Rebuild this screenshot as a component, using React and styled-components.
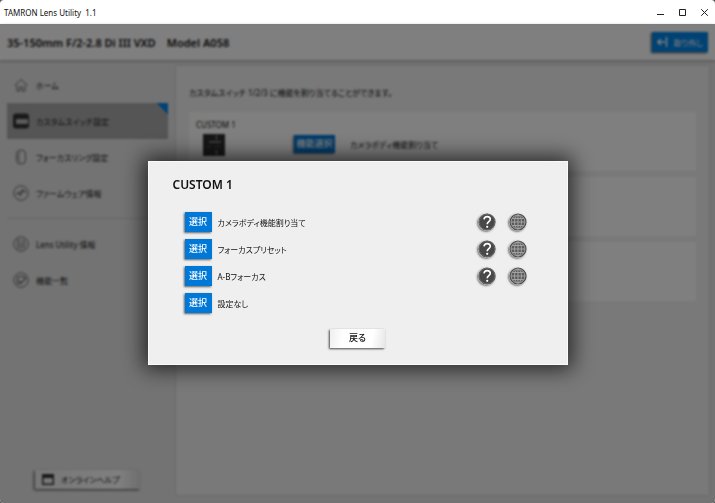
import styled, { createGlobalStyle } from "styled-components";

const navItems = [
    { label: "ホーム", icon: "home" },
    { label: "カスタムスイッチ設定", icon: "switch", active: true },
    { label: "フォーカスリング設定", icon: "ring" },
    { label: "ファームウェア情報", icon: "firmware" },
]

const infoItems = [
    { label: "Lens Utility 情報", icon: "info" },
    { label: "機能一覧", icon: "list" },
]

const functions = [
    { label: "カメラボディ機能割り当て", help: true },
    { label: "フォーカスプリセット", help: true },
    { label: "A-Bフォーカス", help: true },
    { label: "設定なし", help: false },
]

export default function App(){
    return (
        <Window>
            <TitleBar>
                <span>TAMRON Lens Utility&nbsp; 1.1</span>
                <div className="controls">
                    <button aria-label="最小化">
                        <svg width="9" height="9" viewBox="0 0 9 9"><path d="M1 6.500h7" /></svg>
                    </button>
                    <button aria-label="最大化">
                        <svg width="9" height="9" viewBox="0 0 9 9"><path d="M1.500 1.500h6v6h-6z" /></svg>
                    </button>
                    <button aria-label="閉じる">
                        <svg width="9" height="9" viewBox="0 0 9 9"><path d="M1.200 1.200l6.600 6.600M7.800 1.200l-6.600 6.600" /></svg>
                    </button>
                </div>
            </TitleBar>

            <Content>
                <Header>
                    <h1>35-150mm F/2-2.8 Di III VXD</h1>
                    <h2>Model A058</h2>
                    <RemoveButton>
                        <svg width="12" height="10" viewBox="0 0 12 10" fill="none" stroke="#fff" strokeWidth="1.500">
                            <path d="M10.500 0v10M9 5H2M4.800 2L1.800 5l3 3" />
                        </svg>
                        取り外し
                    </RemoveButton>
                </Header>

                <Body>
                    <Sidebar>
                        <nav>
                            {navItems.map((item) => <NavLink key={item.label} item={item} />)}
                            <hr />
                            {infoItems.map((item) => <NavLink key={item.label} item={item} />)}
                        </nav>
                        <HelpButton>
                            <svg width="12" height="11" viewBox="0 0 12 11">
                                <path fill="#333" d="M0 0h12v11H0zM1.500 4v5.500h9V4z" fillRule="evenodd" />
                            </svg>
                            オンラインヘルプ
                        </HelpButton>
                    </Sidebar>

                    <Main>
                        <p>カスタムスイッチ 1/2/3 に機能を割り当てることができます。</p>
                        <Card>
                            <h3>CUSTOM 1</h3>
                            <div className="setting">
                                <Thumb viewBox="0 0 22 22">
                                    <path fill="#2c2c2c" d="M0 0h22v22H0z" />
                                    <path stroke="#999" d="M13.500 1v5M13.500 16v5" />
                                    <path stroke="#777" strokeWidth="2" d="M6 8h12" />
                                    <path stroke="#555" d="M4 12.500h4M12 12.500h5" />
                                </Thumb>
                                <BlueButton $wide>機能選択</BlueButton>
                                <span>カメラボディ機能割り当て</span>
                            </div>
                        </Card>
                        <Card />
                        <Card />
                    </Main>
                </Body>

                <Overlay>
                    <Modal role="dialog" aria-labelledby="modal-title">
                        <h2 id="modal-title">CUSTOM 1</h2>
                        <ul>
                            {functions.map((fn, i) => (
                                <FunctionRow key={fn.label}>
                                    <BlueButton aria-describedby={`fn-${i}`}>選択</BlueButton>
                                    <span id={`fn-${i}`}>{fn.label}</span>
                                    {fn.help && (
                                        <div className="links">
                                            <RoundButton aria-label="ヘルプ"><QuestionIcon /></RoundButton>
                                            <RoundButton aria-label="ウェブサイト"><GlobeIcon /></RoundButton>
                                        </div>
                                    )}
                                </FunctionRow>
                            ))}
                        </ul>
                        <BackButton>戻る</BackButton>
                    </Modal>
                </Overlay>
            </Content>
        </Window>
    )
}

function NavLink({ item }){
    return (
        <NavItem href="#" $active={item.active}>
            <NavIcon name={item.icon} />
            {item.label}
        </NavItem>
    )
}

function NavIcon({ name }){
    return (
        <svg width="16" height="16" viewBox="0 0 16 16" fill="none" stroke="#6a6a6a" strokeWidth="1">
            {name === "home" && <path d="M1.500 8.500L8 2.500l6.500 6M4 8v6h2.800v-4h2.400v4H12V8" />}
            {name === "switch" && (
                <>
                    <rect x="0" y="0.500" width="16" height="15" rx="3" fill="#333" stroke="none" />
                    <rect x="3" y="6" width="12" height="5" rx="1" fill="#b5b5b5" stroke="none" />
                </>
            )}
            {name === "ring" && (
                <>
                    <rect x="3.500" y="1" width="9" height="14" rx="4" />
                    <path d="M7 2.500c-2 2-2 9 0 11" />
                </>
            )}
            {name === "firmware" && (
                <>
                    <circle cx="8" cy="8" r="7.200" />
                    <path strokeWidth="1.200" d="M3.500 9.500l2-2 2 2.500 2.500-5 3 2.500M7 11l2-6" />
                </>
            )}
            {name === "info" && (
                <>
                    <circle cx="8" cy="8" r="7.200" />
                    <path strokeWidth="1.200" d="M5 3v10M8 3.500v1.500M8 6.500V13M11 3.500v9" />
                </>
            )}
            {name === "list" && (
                <>
                    <circle cx="8" cy="8" r="7.200" />
                    <path strokeWidth="1.200" d="M4.500 4.500h7v4M4.500 4.500v7h4M6 8.500l2 2.500 5-5" />
                </>
            )}
        </svg>
    )
}

function QuestionIcon(){
    return (
        <svg width="18" height="18" viewBox="0 0 18 18" fill="none">
            <circle cx="9" cy="9" r="8.600" fill="#484848" />
            <circle cx="9" cy="9" r="7.800" stroke="#707070" strokeWidth="0.800" />
            <path stroke="#fff" strokeWidth="1.600" d="M6 6.400C6.200 4.500 7.400 3.600 9.200 3.600c1.900 0 3.100 1.100 3.100 2.700 0 2.300-3.100 2.300-3.100 5" />
            <circle cx="9.200" cy="13.800" r="1.100" fill="#fff" />
        </svg>
    )
}

function GlobeIcon(){
    return (
        <svg width="18" height="18" viewBox="0 0 18 18" fill="none">
            <circle cx="9" cy="9" r="8.600" fill="#484848" />
            <circle cx="9" cy="9" r="7" fill="#5c5c5c" />
            <g stroke="#a8a8a8" strokeWidth="0.900">
                <circle cx="9" cy="9" r="7" />
                <ellipse cx="9" cy="9" rx="3.500" ry="7" />
                <path d="M9 2v14M2 9h14M3.200 5.500h11.600M3.200 12.500h11.600" />
            </g>
        </svg>
    )
}

const GlobalStyle = createGlobalStyle`
    * {
        box-sizing: border-box;
    }

    body {
        margin: 0;
        background-color: #555;
        font-family: "Noto Sans", "Noto Sans CJK JP", sans-serif;
        font-feature-settings: "palt";
        font-size: 8px;
        color: #111;
    }

    h1, h2, h3, p, ul {
        margin: 0;
        padding: 0;
    }

    button {
        padding: 0;
        border: none;
        font: inherit;
        font-feature-settings: "palt";
        color: inherit;
        cursor: pointer;
    }
`

function Window({ children }){
    return (
        <>
            <GlobalStyle />
            <Frame>{children}</Frame>
        </>
    )
}

const Frame = styled.div`
    display: flex;
    flex-direction: column;
    min-height: 100vh;
    border-radius: 4px;
    overflow: hidden;
`
const TitleBar = styled.div`
    display: flex;
    align-items: center;
    justify-content: space-between;
    height: 24px;
    padding: 0 6px 0 4px;
    background-color: #fff;

    .controls {
        display: flex;
        gap: 13px;
    }

    button {
        display: flex;
        background: none;
    }

    path {
        fill: none;
        stroke: #222;
    }
`
const Content = styled.div`
    position: relative;
    flex: 1;
    display: flex;
    flex-direction: column;
    background-color: #e6e6e6;
`
const Header = styled.header`
    display: flex;
    align-items: center;
    gap: 11px;
    height: 36px;
    padding: 0 7px;
    background-color: #fff;
    box-shadow: 0 1px 3px rgba(0, 0, 0, 0.3);

    h1, h2 {
        font-size: 11px;
        font-weight: 600;
    }
`
const RemoveButton = styled.button`
    display: flex;
    align-items: center;
    gap: 6px;
    height: 20px;
    margin-left: auto;
    padding: 0 5px 0 4px;
    background-color: #0084e8;
    color: #fff;
    box-shadow: -1px 1px 2px rgba(0, 0, 0, 0.7);
`
const Body = styled.div`
    flex: 1;
    display: flex;
    padding: 6px 6px 8px 7px;
`
const Sidebar = styled.aside`
    display: flex;
    flex-direction: column;
    justify-content: space-between;
    align-items: center;
    width: 161px;
    margin-right: 8px;
    padding: 1px 0 6px;

    nav {
        display: flex;
        flex-direction: column;
        width: 100%;
    }

    hr {
        width: 100%;
        height: 1px;
        margin: 7px 0;
        border: none;
        background-color: #ccc;
    }
`
const NavItem = styled.a`
    display: flex;
    align-items: center;
    gap: 7px;
    height: 36px;
    padding: 0 6px;
    color: #222;
    text-decoration: none;
    background: ${({ $active }) => $active
        ? "linear-gradient(225deg, #0084e8 8px, #aaa 8px)"
        : "none"};
`
const HelpButton = styled.button`
    display: flex;
    align-items: center;
    gap: 7px;
    width: 105px;
    height: 19px;
    padding: 0 7px;
    background: linear-gradient(90deg, #eee, #fff 80%, #ddd);
    box-shadow: -1px 1px 2px rgba(0, 0, 0, 0.7);
`
const Main = styled.main`
    flex: 1;
    display: flex;
    flex-direction: column;
    gap: 6px;
    padding: 20px 13px;
    background-color: #f2f2f2;
    box-shadow: 0 0 2px rgba(0, 0, 0, 0.2);

    p {
        margin-bottom: 6px;
        line-height: 14px;
    }
`
const Card = styled.section`
    min-height: 59px;
    padding: 6px 7px;
    background-color: #fff;

    h3 {
        font-size: 8px;
        font-weight: 400;
        line-height: 14px;
    }

    .setting {
        display: flex;
        align-items: center;
        padding-left: 7px;
    }

    .setting span {
        margin-left: 15px;
    }
`
const Thumb = styled.svg`
    width: 22px;
    height: 22px;
    margin: 2px 69px 0 0;
`
const BlueButton = styled.button`
    width: ${({ $wide }) => $wide ? "41px" : "27px"};
    height: ${({ $wide }) => $wide ? "18px" : "20px"};
    background-color: #0078d7;
    color: #fff;
    font-size: 9px;
    font-weight: 500;
    line-height: 18px;
    box-shadow: -1px 1px 2px rgba(0, 0, 0, 0.6);
`
const Overlay = styled.div`
    position: absolute;
    inset: 0;
    display: flex;
    align-items: center;
    justify-content: center;
    padding-bottom: 2px;
    background-color: rgba(0, 0, 0, 0.5);
    backdrop-filter: blur(1px);
`
const Modal = styled.div`
    display: flex;
    flex-direction: column;
    width: 100%;
    max-width: 420px;
    padding: 14px 24px 16px;
    background-color: #efefef;
    border: 1px solid #fafafa;
    box-shadow: 0 0 20px 4px rgba(0, 0, 0, 0.7);

    h2 {
        font-size: 12px;
        font-weight: 600;
        line-height: 18px;
    }

    ul {
        margin: 15px 0 12px 12px;
        list-style: none;
    }
`
const FunctionRow = styled.li`
    display: flex;
    align-items: center;
    gap: 6px;
    height: 27px;

    .links {
        display: flex;
        gap: 13px;
        margin-left: auto;
        padding-right: 16px;
    }
`
const RoundButton = styled.button`
    display: flex;
    border-radius: 50%;
    background: none;
    box-shadow: -1px 1px 2px rgba(0, 0, 0, 0.5);
`
const BackButton = styled.button`
    align-self: center;
    width: 55px;
    height: 19px;
    background: linear-gradient(100deg, #eee, #fff 25%, #fff 75%, #e6e6e6);
    font-size: 9px;
    font-weight: 500;
    line-height: 18px;
    box-shadow: -1px 1px 2px rgba(0, 0, 0, 0.7);
`
